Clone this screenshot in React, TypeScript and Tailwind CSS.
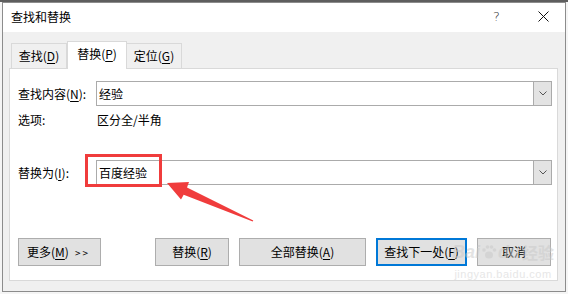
import React from 'react';

const U = ({ children }: { children: React.ReactNode }) => <span className="underline underline-offset-2">{children}</span>;

const Combo = ({ value }: { value: string }) => (
  <div className="flex-1 h-[25px] flex border border-[#ababab] bg-white">
    <div className="flex-1 pl-[2px] leading-[23px] text-[12px] text-black">{value}</div>
    <div className="w-[18px] h-full bg-[#e3e3e3] border-l border-[#ababab] flex items-center justify-center">
      <svg width="8" height="5" viewBox="0 0 8 5">
        <path d="M0.5 0.5 L4 4 L7.5 0.5" fill="none" stroke="#555" strokeWidth="1" />
      </svg>
    </div>
  </div>
);

const Btn = ({ className, children }: { className: string; children: React.ReactNode }) => (
  <div className={`h-[28px] flex items-center bg-[#e1e1e1] border text-[12px] text-black ${className}`}>{children}</div>
);

export default function App() {
  return (
    <div className="relative w-[568px] h-[294px] bg-[#f5f5f5] overflow-hidden font-['Noto_Sans_CJK_SC',sans-serif]">
      <div className="h-[2px] bg-[#5e5e5e]" />
      <div className="ml-[2px] w-[564px] h-[290px] border border-[#8c8c8c] bg-[#f0f0f0] flex flex-col">
        {/* title bar */}
        <div className="h-[29px] bg-white flex items-center pl-[8px] pb-[2px] text-[12px] text-black">
          <span>查找和替换</span>
          <span className="ml-auto mr-[38px] text-[13px] font-['DejaVu_Sans',sans-serif] font-light text-[#333]">?</span>
          <svg width="11" height="11" viewBox="0 0 11 11" className="mr-[16px]">
            <path d="M0.5 0.5 L10.5 10.5 M10.5 0.5 L0.5 10.5" stroke="#111" strokeWidth="1" />
          </svg>
        </div>

        {/* tabs */}
        <div className="mt-[9px] h-[27px] pl-[8px] flex items-end text-[12px] text-black">
          <div className="w-[56px] h-[25px] border border-b-0 border-[#d9d9d9] flex items-center justify-center">
            查找(<U>D</U>)
          </div>
          <div className="relative z-10 w-[60px] h-[28px] -mb-[1px] bg-white border border-b-0 border-[#d9d9d9] flex items-center justify-center pb-[3px]">
            替换(<U>P</U>)
          </div>
          <div className="w-[55px] h-[25px] border border-l-0 border-b-0 border-[#d9d9d9] flex items-center justify-center">
            定位(<U>G</U>)
          </div>
        </div>

        {/* panel */}
        <div className="ml-[6px] w-[549px] h-[213px] bg-white border border-[#d9d9d9] pl-[8px] pr-[5px] flex flex-col text-[12px] text-black">
          <div className="mt-[12px] flex items-center">
            <div className="w-[78px]">查找内容(<U>N</U>):</div>
            <Combo value="经验" />
          </div>
          <div className="mt-[6px] h-[16px] leading-[16px] flex">
            <div className="w-[79px]">选项:</div>
            <div>区分全/半角</div>
          </div>
          <div className="mt-[32px] flex items-center">
            <div className="w-[78px]">替换为(<U>I</U>):</div>
            <Combo value="百度经验" />
          </div>
          <div className="mt-[53px] flex">
            <Btn className="w-[83px] pl-[8px] border-[#adadad]">
              更多(<U>M</U>)<span className="ml-[6px] text-[10px] tracking-[2px]">&gt;&gt;</span>
            </Btn>
            <Btn className="ml-[54px] w-[74px] justify-center border-[#adadad]">替换(<U>R</U>)</Btn>
            <Btn className="ml-[10px] w-[127px] justify-center border-[#adadad]">全部替换(<U>A</U>)</Btn>
            <Btn className="ml-[10px] w-[91px] justify-center border-2 border-[#0078d7]">查找下一处(<U>F</U>)</Btn>
            <Btn className="ml-[10px] w-[74px] justify-center border-[#adadad]">取消</Btn>
          </div>
        </div>
      </div>

      {/* red highlight box */}
      <div className="absolute left-[85px] top-[154px] w-[77px] h-[33px] border-[3px] border-[#f03c3c]" />

      {/* red arrow */}
      <svg className="absolute left-0 top-0" width="568" height="294" viewBox="0 0 568 294">
        <polygon
          points="167,183 189,182 187,187.5 253.3,220.4 252.7,221.6 183.7,194.8 181,199.5"
          fill="#f03c3c"
        />
      </svg>

      {/* watermark */}
      <div className="absolute left-[452px] top-[242px] flex flex-col items-center opacity-50 pointer-events-none">
        <div className="flex items-center text-[18px] font-bold italic text-[#c9c9c9] font-['Liberation_Sans',sans-serif] leading-[20px]">
          <span>Bai</span>
          <svg width="16" height="16" viewBox="0 0 16 16" className="mx-[1px]">
            <ellipse cx="8" cy="11" rx="4" ry="3.5" fill="#c9c9c9" />
            <circle cx="3" cy="6" r="1.8" fill="#c9c9c9" />
            <circle cx="6.5" cy="3" r="1.8" fill="#c9c9c9" />
            <circle cx="10.5" cy="3" r="1.8" fill="#c9c9c9" />
            <circle cx="13.5" cy="6" r="1.8" fill="#c9c9c9" />
          </svg>
          <span>du</span>
          <span className="ml-[2px] not-italic text-[16px] font-['Noto_Sans_CJK_SC',sans-serif]">经验</span>
        </div>
        <div className="mt-[4px] text-[11px] text-[#cfcfcf] font-['Liberation_Sans',sans-serif] tracking-[0.5px]">jingyan.baidu.com</div>
      </div>
    </div>
  );
}
